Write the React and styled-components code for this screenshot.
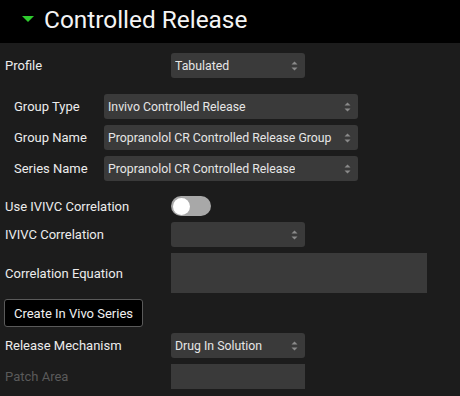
import React, { useState } from 'react';
import styled, { createGlobalStyle } from 'styled-components';

const GlobalStyle = createGlobalStyle`
  html, body {
    margin: 0;
    padding: 0;
    background: #1c1c1c;
  }
  body {
    font-family: Roboto, "Liberation Sans", sans-serif;
    color: #ececec;
  }
`;

const Page = styled.div`
  width: 460px;
  height: 396px;
  overflow: hidden;
  background: #1c1c1c;
`;

const Header = styled.div`
  height: 43px;
  background: #000;
  display: flex;
  align-items: center;
  padding-left: 22px;
  gap: 10px;
`;

const Caret = styled.span`
  width: 0;
  height: 0;
  border-left: 6.5px solid transparent;
  border-right: 6.5px solid transparent;
  border-top: 6px solid #2ecc2e;
  margin-top: -5px;
`;

const Title = styled.h1`
  margin: 0;
  font-size: 24.4px;
  font-weight: 400;
  color: #f4f4f4;
  margin-top: -4px;
`;

const Body = styled.div`
  display: flex;
  flex-direction: column;
  gap: 6px;
  padding: 10px 4px 0 4px;
`;

const Row = styled.div`
  display: grid;
  grid-template-columns: ${p => p.$labelWidth || 167}px auto;
  align-items: center;
  padding-left: ${p => p.$indent || 0}px;
`;

const Group = styled.div`
  display: flex;
  flex-direction: column;
  gap: 6px;
  margin: 10px 0 9px;
`;

const Label = styled.span`
  font-size: 13px;
  padding-left: 1px;
  white-space: nowrap;
  color: ${p => (p.$disabled ? '#5a5a5a' : '#ececec')};
`;

const SelectBox = styled.div`
  box-sizing: border-box;
  width: ${p => p.$width}px;
  height: 25px;
  background: #3a3a3a;
  border-radius: 3px;
  display: flex;
  align-items: center;
  justify-content: space-between;
  gap: 4px;
  padding: 0 7px 0 4px;
  font-size: 12.3px;
  color: #e6e6e6;
  white-space: nowrap;
  & > span {
    overflow: hidden;
  }
  & > svg {
    flex: none;
  }
`;

const Field = styled.div`
  box-sizing: border-box;
  width: ${p => p.$width}px;
  height: ${p => p.$height}px;
  background: #3a3a3a;
`;

const Switch = styled.button`
  width: 40px;
  height: 20px;
  border: none;
  padding: 2px;
  border-radius: 10px;
  background: ${p => (p.$on ? '#2ecc2e' : '#a8a8a8')};
  display: flex;
  justify-content: ${p => (p.$on ? 'flex-end' : 'flex-start')};
  cursor: pointer;
`;

const Knob = styled.span`
  width: 17px;
  height: 17px;
  margin: -0.5px 0 0 -0.5px;
  border-radius: 50%;
  background: #fff;
`;

const Button = styled.button`
  align-self: flex-start;
  height: 28px;
  width: 139px;
  background: #000;
  color: #f0f0f0;
  border: 1px solid #5a5a5a;
  border-radius: 3px;
  font-family: Roboto, "Liberation Sans", sans-serif;
  font-size: 13px;
  padding: 0;
`;

const Arrows = () => (
  <svg width="7" height="10" viewBox="0 0 7 10">
    <path d="M3.5 0.5 L6.5 3.5 L0.5 3.5 Z" fill="#8a8a8a" />
    <path d="M3.5 9.5 L6.5 6.5 L0.5 6.5 Z" fill="#8a8a8a" />
  </svg>
);

const Select = ({ value, width = 134 }) => (
  <SelectBox $width={width}>
    <span>{value}</span>
    <Arrows />
  </SelectBox>
);

export default function App() {
  const [ivivc, setIvivc] = useState(false);

  return (
    <Page>
      <GlobalStyle />
      <Header>
        <Caret />
        <Title>Controlled Release</Title>
      </Header>
      <Body>
        <Row>
          <Label>Profile</Label>
          <Select value="Tabulated" />
        </Row>

        <Group>
          <Row $indent={9} $labelWidth={91}>
            <Label>Group Type</Label>
            <Select value="Invivo Controlled Release" width={254} />
          </Row>
          <Row $indent={9} $labelWidth={91}>
            <Label>Group Name</Label>
            <Select value="Propranolol CR Controlled Release Group" width={254} />
          </Row>
          <Row $indent={9} $labelWidth={91}>
            <Label>Series Name</Label>
            <Select value="Propranolol CR Controlled Release" width={254} />
          </Row>
        </Group>

        <Row>
          <Label>Use IVIVC Correlation</Label>
          <Switch $on={ivivc} onClick={() => setIvivc(!ivivc)}>
            <Knob />
          </Switch>
        </Row>
        <Row>
          <Label>IVIVC Correlation</Label>
          <Select value="" />
        </Row>
        <Row>
          <Label>Correlation Equation</Label>
          <Field $width={256} $height={40} />
        </Row>

        <Button>Create In Vivo Series</Button>

        <Row>
          <Label>Release Mechanism</Label>
          <Select value="Drug In Solution" />
        </Row>
        <Row>
          <Label $disabled>Patch Area</Label>
          <Field $width={134} $height={25} />
        </Row>
      </Body>
    </Page>
  );
}
